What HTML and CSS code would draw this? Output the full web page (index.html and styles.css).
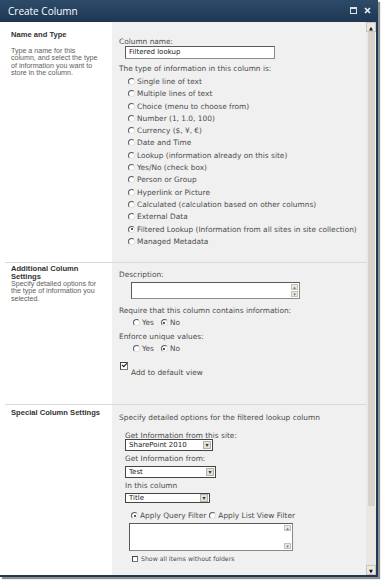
FILE: index.html
```html
<!DOCTYPE html>
<html lang="en">
<head>
    <meta charset="UTF-8">
    <title>Create Column</title>
    <link rel="stylesheet" href="styles.css">
</head>
<body>
    <div class="dialog">
        <div class="titlebar">
            <span class="title">Create Column</span>
            <span class="controls">
                <svg width="7" height="7" viewBox="0 0 7 7"><rect x="0.5" y="0.5" width="6" height="6" fill="none" stroke="#d9e1ea"/><rect x="0" y="0" width="7" height="2" fill="#d9e1ea"/></svg>
                <svg width="7" height="7" viewBox="0 0 7 7"><path d="M1 1 L6 6 M6 1 L1 6" stroke="#eef2f6" stroke-width="1.6"/></svg>
            </span>
        </div>

        <div class="frame">
            <div class="content">
                <!-- Name and Type -->
                <section class="section s-name">
                    <div class="side">
                        <h3>Name and Type</h3>
                        <p>Type a name for this<br>column, and select the type<br>of information you want to<br>store in the column.</p>
                    </div>
                    <div class="main">
                        <div class="label">Column name:</div>
                        <div class="textbox name-box">Filtered lookup</div>
                        <div class="label type-label">The type of information in this column is:</div>
                        <ul class="type-list">
                            <li><span class="radio"></span>Single line of text</li>
                            <li><span class="radio"></span>Multiple lines of text</li>
                            <li><span class="radio"></span>Choice (menu to choose from)</li>
                            <li><span class="radio"></span>Number (1, 1.0, 100)</li>
                            <li><span class="radio"></span>Currency ($, ¥, €)</li>
                            <li><span class="radio"></span>Date and Time</li>
                            <li><span class="radio"></span>Lookup (information already on this site)</li>
                            <li><span class="radio"></span>Yes/No (check box)</li>
                            <li><span class="radio"></span>Person or Group</li>
                            <li><span class="radio"></span>Hyperlink or Picture</li>
                            <li><span class="radio"></span>Calculated (calculation based on other columns)</li>
                            <li><span class="radio"></span>External Data</li>
                            <li><span class="radio checked"></span>Filtered Lookup (Information from all sites in site collection)</li>
                            <li><span class="radio"></span>Managed Metadata</li>
                        </ul>
                    </div>
                </section>

                <!-- Additional Column Settings -->
                <section class="section s-extra">
                    <div class="side">
                        <h3>Additional Column<br>Settings</h3>
                        <p>Specify detailed options for<br>the type of information you<br>selected.</p>
                    </div>
                    <div class="main">
                        <div class="label">Description:</div>
                        <div class="textarea desc-area">
                            <span class="ta-scroll"><span class="ta-btn">▴</span><span class="ta-btn">▾</span></span>
                        </div>
                        <div class="label require-label">Require that this column contains information:</div>
                        <div class="yesno"><span class="radio"></span>Yes<span class="radio checked"></span>No</div>
                        <div class="label enforce-label">Enforce unique values:</div>
                        <div class="yesno"><span class="radio"></span>Yes<span class="radio checked"></span>No</div>
                        <div class="default-view">
                            <span class="checkbox checked"></span>
                            <span class="default-text">Add to default view</span>
                        </div>
                    </div>
                </section>

                <!-- Special Column Settings -->
                <section class="section s-special">
                    <div class="side">
                        <h3>Special Column Settings</h3>
                    </div>
                    <div class="main">
                        <div class="label">Specify detailed options for the filtered lookup column</div>
                        <div class="sub">
                            <div class="label small-label first">Get Information from this site:</div>
                            <div class="select site-select"><span class="value">SharePoint 2010</span><span class="arrow">▾</span></div>
                            <div class="label small-label">Get Information from:</div>
                            <div class="select list-select"><span class="value">Test</span><span class="arrow">▾</span></div>
                            <div class="label small-label">In this column</div>
                            <div class="select col-select"><span class="value">Title</span><span class="arrow">▾</span></div>
                        </div>
                        <div class="filter-row"><span class="radio checked"></span>Apply Query Filter<span class="radio"></span>Apply List View Filter</div>
                        <div class="textarea query-area">
                            <span class="ta-scroll"><span class="ta-btn">▴</span><span class="ta-btn">▾</span></span>
                        </div>
                        <div class="folders"><span class="checkbox"></span>Show all items without folders</div>
                    </div>
                </section>
            </div>

            <div class="scrollbar">
                <div class="sb-btn">▲</div>
                <div class="sb-thumb"></div>
                <div class="sb-track"></div>
                <div class="sb-btn">▼</div>
            </div>
        </div>
    </div>
</body>
</html>
```

FILE: styles.css
```css
* {
    box-sizing: border-box;
    margin: 0;
    padding: 0;
}

body {
    width: 382px;
    height: 582px;
    overflow: hidden;
    background: #fff;
    font-family: 'DejaVu Sans', sans-serif;
}

.dialog {
    width: 378px;
    box-shadow: 2px 2px 1px #8f8f8f;
}

/* title bar */
.titlebar {
    height: 22px;
    display: flex;
    align-items: center;
    justify-content: space-between;
    padding: 0 7px 0 8px;
    background: linear-gradient(to bottom, #2d4b69, #1d3753);
}

.title {
    color: #fff;
    font-family: 'Open Sans', sans-serif;
    font-size: 10px;
}

.controls {
    display: flex;
    gap: 7px;
    padding-bottom: 2px;
}

/* frame */
.frame {
    height: 555px;
    display: flex;
    border-right: 2px solid #1e3a58;
    border-bottom: 2px solid #1e3a58;
}

.content {
    flex: 1;
    overflow: hidden;
    background: #fff;
}

.section {
    margin-left: 5px;
    display: grid;
    grid-template-columns: 107px 1fr;
    border-top: 1px solid #dadada;
}

.s-name {
    border-top: none;
    height: 240px;
}

.s-extra {
    height: 142px;
}

.s-special {
    height: 200px;
}

.side {
    padding-left: 6px;
    color: #5e5e5e;
    font-family: 'Liberation Sans', sans-serif;
}

.side h3 {
    font-size: 7.6px;
    line-height: 8px;
    color: #333;
}

.side p {
    font-size: 7.1px;
    line-height: 7.3px;
}

.s-name .side { padding-top: 9px; }
.s-name .side p { margin-top: 9px; }
.s-extra .side { padding-top: 2px; }
.s-special .side { padding-top: 4px; }

.main {
    background: #f0f0f0;
    padding-left: 7px;
    color: #4c4c4c;
    font-size: 7.4px;
    line-height: 9px;
}

/* form controls */
.textbox,
.textarea,
.select {
    background: #fff;
    border: 1px solid #8a8a8a;
    border-top-color: #5a5a5a;
    border-left-color: #5a5a5a;
}

.radio {
    display: inline-block;
    width: 7px;
    height: 7px;
    margin-right: 2px;
    border-radius: 50%;
    border: 1px solid #e2e2e2;
    border-top-color: #5c5c5c;
    border-left-color: #5c5c5c;
    background: #fff;
    vertical-align: -1px;
    position: relative;
}

.radio.checked::after {
    content: '';
    position: absolute;
    left: 1.5px;
    top: 1.5px;
    width: 2px;
    height: 2px;
    border-radius: 50%;
    background: #222;
}

.checkbox {
    display: inline-block;
    width: 8px;
    height: 8px;
    border: 1px solid #777;
    border-top-color: #444;
    border-left-color: #444;
    background: #fff;
    position: relative;
}

.checkbox.checked::after {
    content: '';
    position: absolute;
    left: 1px;
    top: 0;
    width: 4px;
    height: 2px;
    border-left: 1.5px solid #111;
    border-bottom: 1.5px solid #111;
    transform: rotate(-45deg);
}

/* name and type */
.s-name .main { padding-top: 15px; }

.name-box {
    margin: 0 0 0 6px;
    width: 150px;
    height: 13px;
    padding-left: 3px;
    font-size: 7px;
    line-height: 11px;
    color: #222;
}

.type-label { margin-top: 5px; }

.type-list {
    list-style: none;
    margin: 3px 0 0 9px;
}

.type-list li {
    height: 12.3px;
    line-height: 12.3px;
    white-space: nowrap;
}

/* additional settings */
.s-extra .main { padding-top: 7px; }

.textarea {
    position: relative;
}

.desc-area {
    margin: 3px 0 0 12px;
    width: 169px;
    height: 17px;
}

.ta-scroll {
    position: absolute;
    right: 1px;
    top: 1px;
    bottom: 1px;
    display: flex;
    flex-direction: column;
    justify-content: space-between;
}

.ta-btn {
    width: 7px;
    height: 6px;
    background: #ece9e2;
    border: 1px solid #c6c2b8;
    font-size: 5px;
    line-height: 4px;
    text-align: center;
    color: #777;
}

.require-label { margin-top: 7px; }
.enforce-label { margin-top: 5px; }

.yesno {
    margin: 3px 0 0 14px;
}

.yesno .radio:nth-of-type(2) {
    margin-left: 7px;
}

.default-view {
    margin-top: 9px;
    display: flex;
    align-items: flex-start;
    gap: 3px;
    margin-left: 1px;
}

.default-text {
    margin-top: 6px;
}

/* special settings */
.s-special .main { padding-top: 8px; }

.sub {
    margin-left: 6px;
}

.small-label {
    line-height: 7px;
    margin-top: 4px;
    margin-bottom: 4px;
}

.small-label.first {
    margin-top: 10px;
    margin-bottom: 0;
}

.select {
    display: flex;
    align-items: center;
    justify-content: space-between;
    height: 12px;
    border-color: #444;
    color: #222;
    padding-left: 3px;
    font-size: 7px;
}

.select .arrow {
    width: 8px;
    height: 8px;
    margin-right: 1px;
    background: #e4e1da;
    border: 1px solid #b4b0a6;
    font-size: 6px;
    line-height: 6px;
    text-align: center;
    color: #333;
}

.site-select { width: 88px; }
.list-select { width: 91px; }
.col-select { width: 85px; height: 10px; }

.filter-row {
    margin: 8px 0 0 12px;
    white-space: nowrap;
}

.filter-row .radio:nth-of-type(2) {
    margin-left: 3px;
}

.query-area {
    margin: 3px 0 0 10px;
    width: 164px;
    height: 28px;
}

.folders {
    margin: 3px 0 0 13px;
    font-size: 6.2px;
    display: flex;
    align-items: center;
    gap: 3px;
}

.folders .checkbox {
    width: 6px;
    height: 6px;
}

/* scrollbar */
.scrollbar {
    width: 10px;
    display: flex;
    flex-direction: column;
    background: #e3e0d9;
}

.sb-btn {
    height: 10px;
    font-size: 5px;
    line-height: 10px;
    text-align: center;
    color: #111;
    background: #ebe8e1;
    border: 1px solid #c9c5bc;
}

.sb-thumb {
    height: 474px;
    background: #d7d3ca;
    border-left: 2px solid #ebe9e3;
    border-right: 1px solid #f4f2ee;
}

.sb-track {
    flex: 1;
    background: #e9e7e2;
}
```
